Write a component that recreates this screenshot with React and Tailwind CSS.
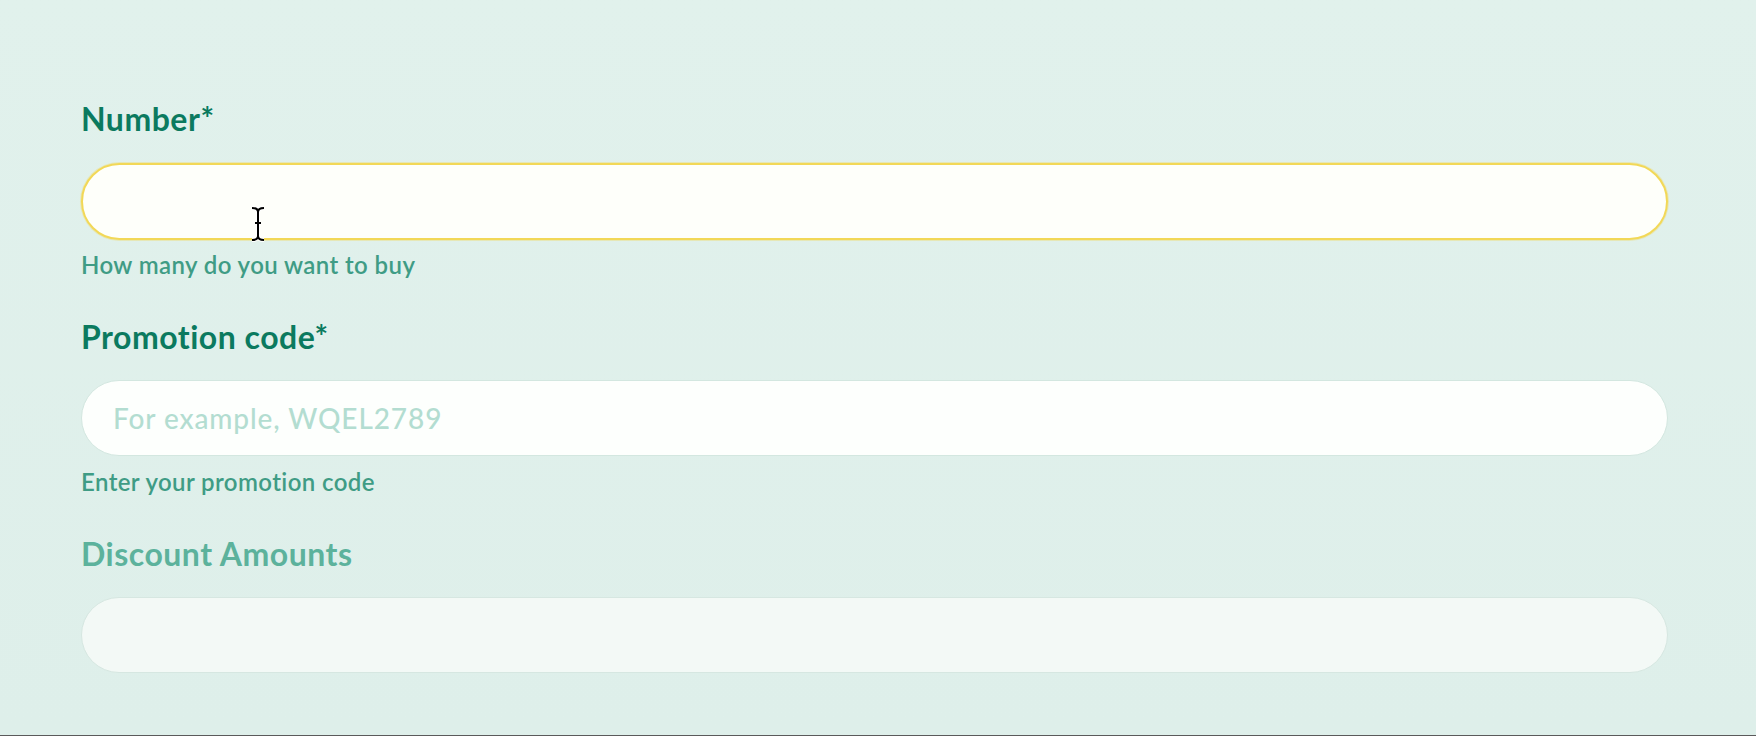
import { useState } from 'react';

const font = { fontFamily: 'Lato, "Noto Sans", sans-serif' };

function Field({ label, helper, children, labelClass = 'text-[#0b7a5f]', first = false }) {
  return (
    <div className="flex flex-col">
      <label className={`text-[32px] leading-[40px] font-bold tracking-[0.5px] ${labelClass}`}>{label}</label>
      <div className={first ? 'mt-[24px]' : 'mt-[23px]'}>{children}</div>
      {helper ? (
        <p className={`${first ? 'mt-[10px]' : 'mt-[11px]'} text-[24px] leading-[30px] font-semibold tracking-[0.4px] text-[#3f9c85]`}>
          {helper}
        </p>
      ) : null}
    </div>
  );
}

export default function App() {
  const [number, setNumber] = useState('');
  const [code, setCode] = useState('');

  return (
    <div
      style={font}
      className="relative h-[736px] bg-gradient-to-b from-[#e1f1ec] to-[#deefea] border-b border-[#5a5a5a] pl-[81px] pr-[88px] pt-[99px]"
    >
      <div className="flex flex-col gap-[37px]">
        <Field label="Number*" helper="How many do you want to buy" first>
          <input
            type="text"
            value={number}
            onChange={(e) => setNumber(e.target.value)}
            className="w-full h-[77px] rounded-full bg-[#fefffa] border-2 border-[#f2d857] shadow-[0_0_0_1px_rgba(242,216,87,0.35)] px-7 text-[28px] text-[#0b7a5f] outline-none"
          />
        </Field>

        <Field label="Promotion code*" helper="Enter your promotion code">
          <input
            type="text"
            value={code}
            onChange={(e) => setCode(e.target.value)}
            placeholder="For example, WQEL2789"
            className="w-full h-[76px] rounded-full bg-[#fdfffd] border border-[#d3e7e0] pl-[31px] pr-7 text-[28px] font-medium tracking-[0.9px] text-[#0b7a5f] placeholder:text-[#b3ddd1] outline-none"
          />
        </Field>

        <Field label="Discount Amounts" labelClass="text-[#5cb29c]">
          <input
            type="text"
            disabled
            className="w-full h-[76px] rounded-full bg-[#f3f9f6] border border-[#d6e7e1] px-7 text-[28px] outline-none"
          />
        </Field>
      </div>

      {/* text cursor over the first input */}
      <svg
        className="absolute left-[250px] top-[206px] pointer-events-none"
        width="16"
        height="36"
        viewBox="0 0 16 36"
      >
        <path
          d="M2 2 C5 2 8 3 8 6 C8 3 11 2 14 2 M8 6 V30 M5 17 H11 M2 34 C5 34 8 33 8 30 C8 33 11 34 14 34"
          fill="none"
          stroke="#ffffff"
          strokeWidth="4"
        />
        <path
          d="M2 2 C5 2 8 3 8 6 C8 3 11 2 14 2 M8 6 V30 M5 17 H11 M2 34 C5 34 8 33 8 30 C8 33 11 34 14 34"
          fill="none"
          stroke="#000000"
          strokeWidth="2"
        />
      </svg>
    </div>
  );
}
